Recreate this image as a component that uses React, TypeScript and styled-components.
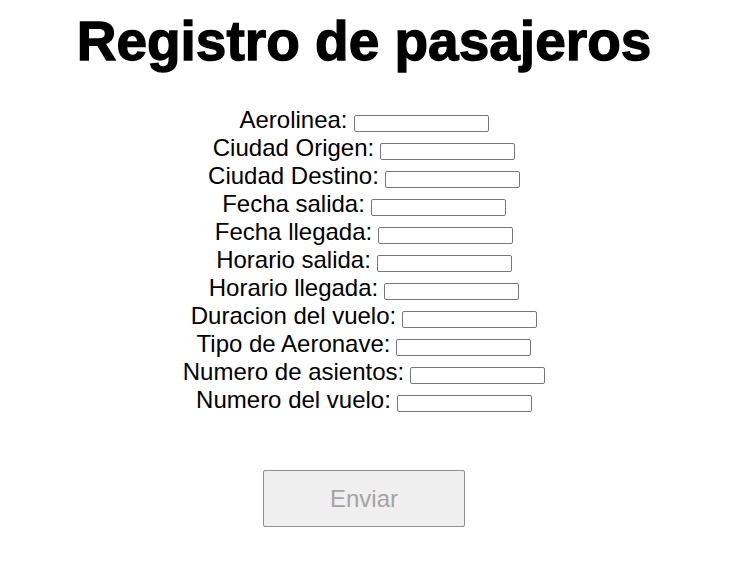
import React from "react";
import styled, { createGlobalStyle } from "styled-components";

const GlobalStyle = createGlobalStyle`
  html, body {
    margin: 0;
    padding: 0;
    background: #ffffff;
  }
  body {
    font-family: "Liberation Sans", Arial, sans-serif;
    color: #000000;
  }
`;

const Page = styled.div`
  width: 728px;
  padding-top: 10px;
  text-align: center;
  font-family: "Liberation Sans", Arial, sans-serif;
`;

const Title = styled.h1`
  margin: 0;
  font-size: 55px;
  line-height: 62px;
  font-weight: 700;
  color: #000;
  -webkit-text-stroke: 1.3px #000;
`;

const Form = styled.form`
  margin-top: 34px;
  display: flex;
  flex-direction: column;
  align-items: center;
`;

const Row = styled.div`
  font-size: 24px;
  line-height: 28px;
  height: 28px;
  white-space: nowrap;
`;

const Label = styled.label`
  color: #000;
`;

const Field = styled.input`
  box-sizing: border-box;
  width: 135px;
  height: 17px;
  margin: 0 0 0 6px;
  padding: 0 2px;
  border: 1px solid #767676;
  border-radius: 2px;
  background: #fff;
  font-size: 12px;
  vertical-align: 1px;
`;

const Submit = styled.button`
  box-sizing: border-box;
  margin-top: 56px;
  width: 202px;
  height: 57px;
  border: 1px solid #8f8f8f;
  border-radius: 2px;
  background: #efefef;
  color: #a3a3a3;
  font-family: "Liberation Sans", Arial, sans-serif;
  font-size: 24px;
`;

const fields = [
  "Aerolinea",
  "Ciudad Origen",
  "Ciudad Destino",
  "Fecha salida",
  "Fecha llegada",
  "Horario salida",
  "Horario llegada",
  "Duracion del vuelo",
  "Tipo de Aeronave",
  "Numero de asientos",
  "Numero del vuelo",
];

export default function App() {
  return (
    <>
      <GlobalStyle />
      <Page>
        <Title>Registro de pasajeros</Title>
        <Form onSubmit={(e) => e.preventDefault()}>
          {fields.map((f) => (
            <Row key={f}>
              <Label>{f}:</Label>
              <Field type="text" />
            </Row>
          ))}
          <Submit type="submit" disabled>
            Enviar
          </Submit>
        </Form>
      </Page>
    </>
  );
}
